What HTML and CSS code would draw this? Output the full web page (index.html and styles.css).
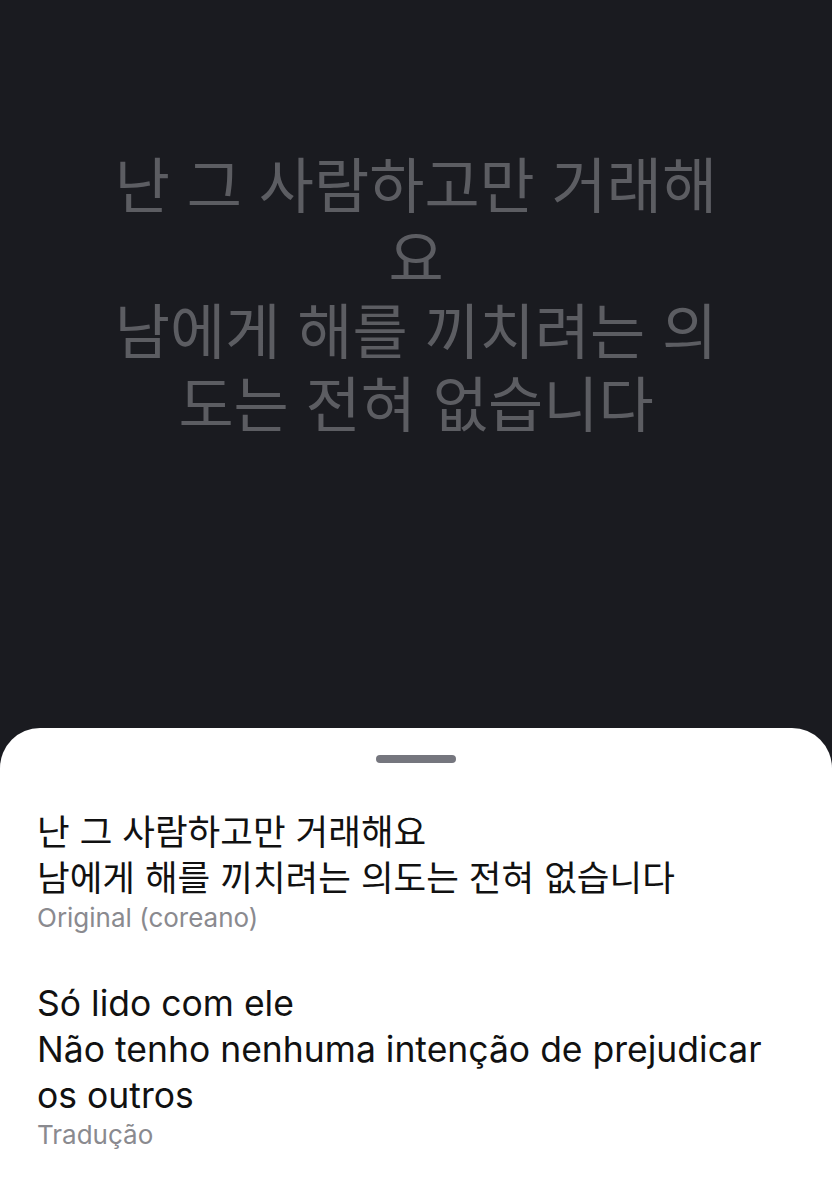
FILE: index.html
```html
<!DOCTYPE html>
<html lang="ko">
<head>
    <meta charset="UTF-8">
    <meta name="viewport" content="width=device-width, initial-scale=1.0">
    <title>Tradução</title>
    <link rel="stylesheet" href="styles.css">
</head>
<body>
    <div class="stage">
        <p class="caption">난 그 사람하고만 거래해요<br>남에게 해를 끼치려는 의도는 전혀 없습니다</p>
    </div>
    <div class="sheet">
        <div class="handle"></div>
        <div class="block">
            <p class="text">난 그 사람하고만 거래해요<br>남에게 해를 끼치려는 의도는 전혀 없습니다</p>
            <p class="label" lang="pt">Original (coreano)</p>
        </div>
        <div class="block">
            <p class="text" lang="pt">Só lido com ele<br>Não tenho nenhuma intenção de prejudicar os outros</p>
            <p class="label" lang="pt">Tradução</p>
        </div>
    </div>
</body>
</html>
```

FILE: styles.css
```css
body {
    margin: 0;
    background-color: #1a1b20;
    font-family: Inter, "Noto Sans CJK KR", sans-serif;
}
.stage {
    height: 728px;
    display: flex;
    justify-content: center;
    padding-top: 145px;
    box-sizing: border-box;
}
.caption {
    margin: 0;
    width: 630px;
    text-align: center;
    font-family: "Noto Sans CJK KR", sans-serif;
    font-size: 60px;
    line-height: 73px;
    color: #5c5d62;
    word-break: break-all;
}
.sheet {
    background-color: #ffffff;
    border-radius: 40px 40px 0 0;
    min-height: 472px;
    padding: 27px 37px 40px;
    box-sizing: border-box;
    display: flex;
    flex-direction: column;
}
.handle {
    align-self: center;
    width: 80px;
    height: 8px;
    border-radius: 4px;
    background-color: #75767e;
    margin-bottom: 47px;
}
.block {
    margin-bottom: 47px;
}
.text {
    margin: 0;
    font-size: 35.5px;
    line-height: 46px;
    color: #111111;
}
.label {
    margin: 0;
    font-size: 26px;
    line-height: 32px;
    color: #8a8a8f;
}
```
